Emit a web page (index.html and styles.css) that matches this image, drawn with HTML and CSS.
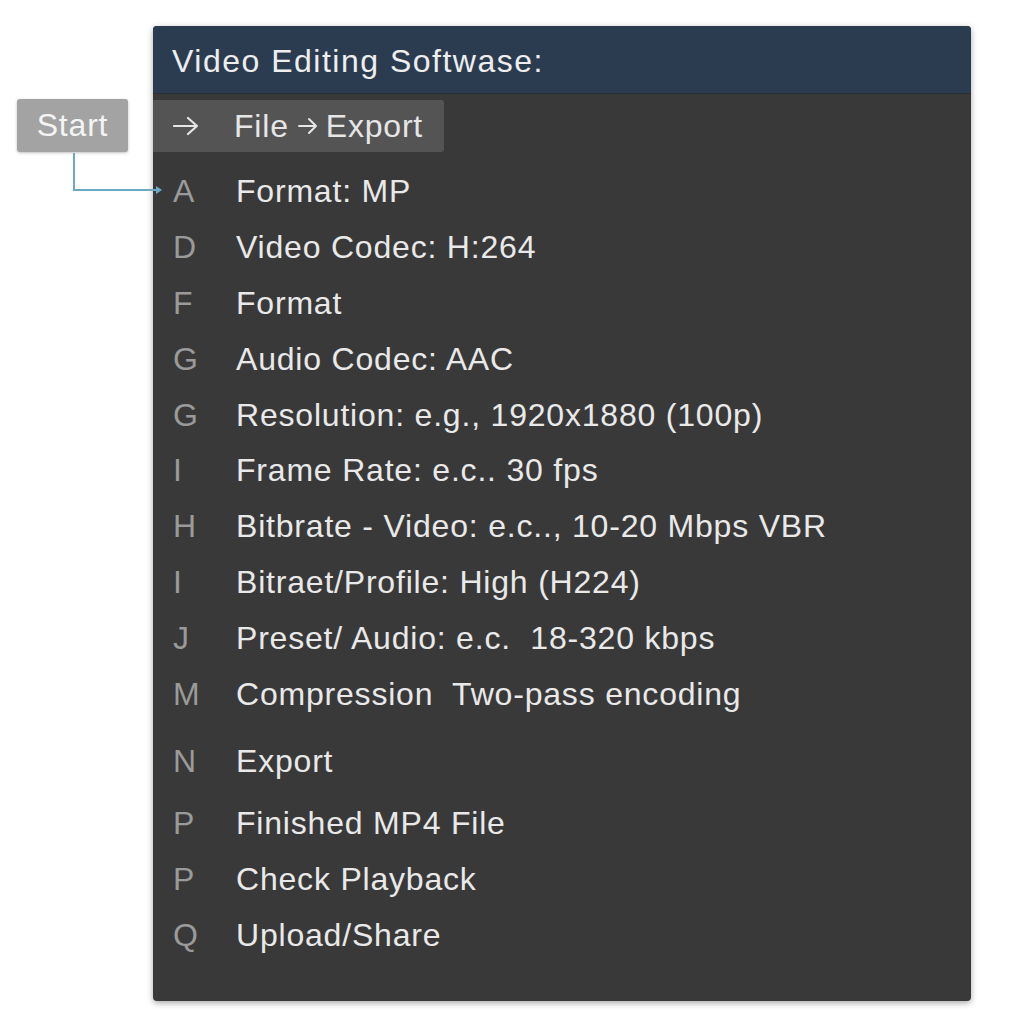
FILE: index.html
```html
<!DOCTYPE html>
<html>
<head>
<meta charset="utf-8">
<link rel="stylesheet" href="styles.css">
</head>
<body>
<div class="stage">
  <div class="start">Start</div>
  <svg class="connector" width="100" height="50" viewBox="0 0 100 50">
    <path d="M1 0 V37 H86" fill="none" stroke="#6fa8c2" stroke-width="2"/>
    <path d="M83 33 L89 37 L83 41 Z" fill="#6fa8c2"/>
  </svg>
  <div class="panel">
    <div class="header">Video Editing Softwase:</div>
    <div class="body">
      <div class="menu">
        <svg class="arr" width="26" height="20" viewBox="0 0 26 20"><path d="M1 10 H24 M15 2 L24 10 L15 18" fill="none" stroke="#e6e6e6" stroke-width="2.2" stroke-linecap="round" stroke-linejoin="round"/></svg>
        <span>File</span>
        <svg class="arr2" width="20" height="18" viewBox="0 0 20 18"><path d="M1 9 H18 M11 2 L18 9 L11 16" fill="none" stroke="#e6e6e6" stroke-width="2" stroke-linecap="round" stroke-linejoin="round"/></svg>
        <span>Export</span>
      </div>
      <ul class="list">
        <li><span class="k">A</span><span class="t">Format: MP</span></li>
        <li><span class="k">D</span><span class="t">Video Codec: H:264</span></li>
        <li><span class="k">F</span><span class="t">Format</span></li>
        <li><span class="k">G</span><span class="t">Audio Codec: AAC</span></li>
        <li><span class="k">G</span><span class="t">Resolution: e.g., 1920x1880 (100p)</span></li>
        <li><span class="k">I</span><span class="t">Frame Rate: e.c.. 30 fps</span></li>
        <li><span class="k">H</span><span class="t">Bitbrate - Video: e.c.., 10-20 Mbps VBR</span></li>
        <li><span class="k">I</span><span class="t">Bitraet/Profile: High (H224)</span></li>
        <li><span class="k">J</span><span class="t">Preset/ Audio: e.c.&nbsp; 18-320 kbps</span></li>
        <li><span class="k">M</span><span class="t">Compression&nbsp; Two-pass encoding</span></li>
        <li class="gap"><span class="k">N</span><span class="t">Export</span></li>
        <li class="gap2"><span class="k">P</span><span class="t">Finished MP4 File</span></li>
        <li><span class="k">P</span><span class="t">Check Playback</span></li>
        <li><span class="k">Q</span><span class="t">Upload/Share</span></li>
      </ul>
    </div>
  </div>
</div>
</body>
</html>
```

FILE: styles.css
```css
* { box-sizing: border-box; }
html, body { margin: 0; padding: 0; background: #ffffff; }
body { font-family: "Liberation Sans", Arial, sans-serif; width: 1024px; height: 1024px; overflow: hidden; }
.stage { position: relative; width: 1024px; height: 1024px; }
.start {
  position: absolute; left: 17px; top: 99px; width: 111px; height: 53px;
  background: #a3a3a3; color: #f4f4f4; font-size: 32px; letter-spacing: 0.8px; border-radius: 3px;
  display: flex; align-items: center; justify-content: center;
  box-shadow: 0 1px 3px rgba(0,0,0,0.25);
}
.connector { position: absolute; left: 73px; top: 153px; z-index: 2; }
.panel {
  position: absolute; left: 153px; top: 26px; width: 818px; height: 975px;
  background: #393939; border-radius: 4px; overflow: hidden;
  box-shadow: 0 2px 6px rgba(0,0,0,0.35);
}
.header {
  height: 68px; background: #2b3c51; color: #eeeeee;
  font-size: 32px; letter-spacing: 1.5px; padding-left: 19px; padding-top: 4px; display: flex; align-items: center;
  border-bottom: 1px solid #2a2f36;
}
.body { padding-top: 6px; }
.menu {
  width: 291px; height: 52px; background: #545454; color: #e6e6e6;
  font-size: 32px; letter-spacing: 0.8px; padding-left: 20px; display: flex; align-items: center;
  border-radius: 0 3px 3px 0;
}
.arr { margin-right: 35px; }
.arr2 { margin: 0 8px 0 9px; }
.list { list-style: none; margin: 0; padding: 12px 0 0 0; }
.list li { height: 55.8px; display: flex; align-items: center; font-size: 32px; letter-spacing: 0.8px; }
.list li.gap { margin-top: 12px; }
.list li.gap2 { margin-top: 6px; }
.k { width: 83px; padding-left: 20px; color: #9a9a9a; letter-spacing: 0; }
.t { color: #e9e9e9; }
```
